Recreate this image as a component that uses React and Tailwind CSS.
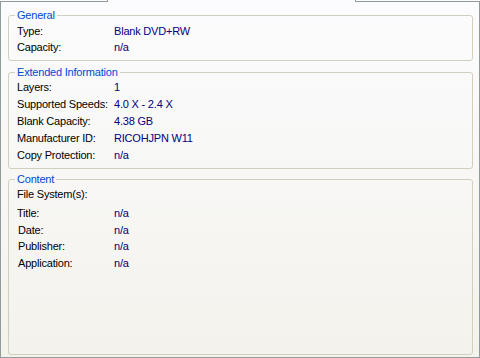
const general = [
  ['Type:', 'Blank DVD+RW'],
  ['Capacity:', 'n/a'],
]

const extended = [
  ['Layers:', '1'],
  ['Supported Speeds:', '4.0 X - 2.4 X'],
  ['Blank Capacity:', '4.38 GB'],
  ['Manufacturer ID:', 'RICOHJPN W11'],
  ['Copy Protection:', 'n/a'],
]

const content = [
  ['Title:', 'n/a', ''],
  ['Date:', 'n/a', 'pl-[1px]'],
  ['Publisher:', 'n/a', 'pl-[1px]'],
  ['Application:', 'n/a', 'pl-[1px]'],
]

function Group({ title, className = '', children }) {
  return (
    <fieldset className={`mx-[7px] mr-[6px] px-[8px] border border-[#d0d0bf] rounded-[3px] min-w-0 ${className}`}>
      <legend className="-ml-[2px] px-[2px] leading-[14px] text-[#0046d5]">{title}</legend>
      {children}
    </fieldset>
  )
}

function Row({ label, value, h = 'h-[16px]', labelCls = '' }) {
  return (
    <div className={`flex items-center ${h}`}>
      <span className={`w-[97px] shrink-0 text-black ${labelCls}`}>{label}</span>
      <span className="text-[#000080]">{value}</span>
    </div>
  )
}

export default function App() {
  return (
    <div
      className="w-[480px] h-[358px] flex flex-col bg-gradient-to-b from-[#fcfcfe] to-[#f3f2ec] text-[11px] tracking-[-0.2px]"
      style={{ fontFamily: '"Liberation Sans", Arial, sans-serif' }}
    >
      {/* tab strip edge */}
      <div className="flex h-[2px] shrink-0">
        <div className="w-[108px] border-b border-r border-[#919b9c]" />
        <div className="flex-1" />
        <div className="w-[125px] border-b border-l border-[#919b9c]" />
      </div>

      <div className="flex-1 flex flex-col border-x border-b border-[#919b9c] pt-[6px] pb-[2px] min-h-0">
        <Group title="General" className="pb-[5px]">
          <div className="pt-[1px]">
            {general.map(([l, v]) => <Row key={l} label={l} value={v} />)}
          </div>
        </Group>

        <Group title="Extended Information" className="mt-[4px] pb-[4px]">
          {extended.map(([l, v]) => <Row key={l} label={l} value={v} h="h-[17px]" />)}
        </Group>

        <Group title="Content" className="mt-[3px] flex-1">
          <div className="h-[16px] flex items-center text-black">File System(s):</div>
          <div className="mt-[3px]">
            {content.map(([l, v, c]) => <Row key={l} label={l} value={v} h="h-[16.5px]" labelCls={c} />)}
          </div>
        </Group>
      </div>
    </div>
  )
}
